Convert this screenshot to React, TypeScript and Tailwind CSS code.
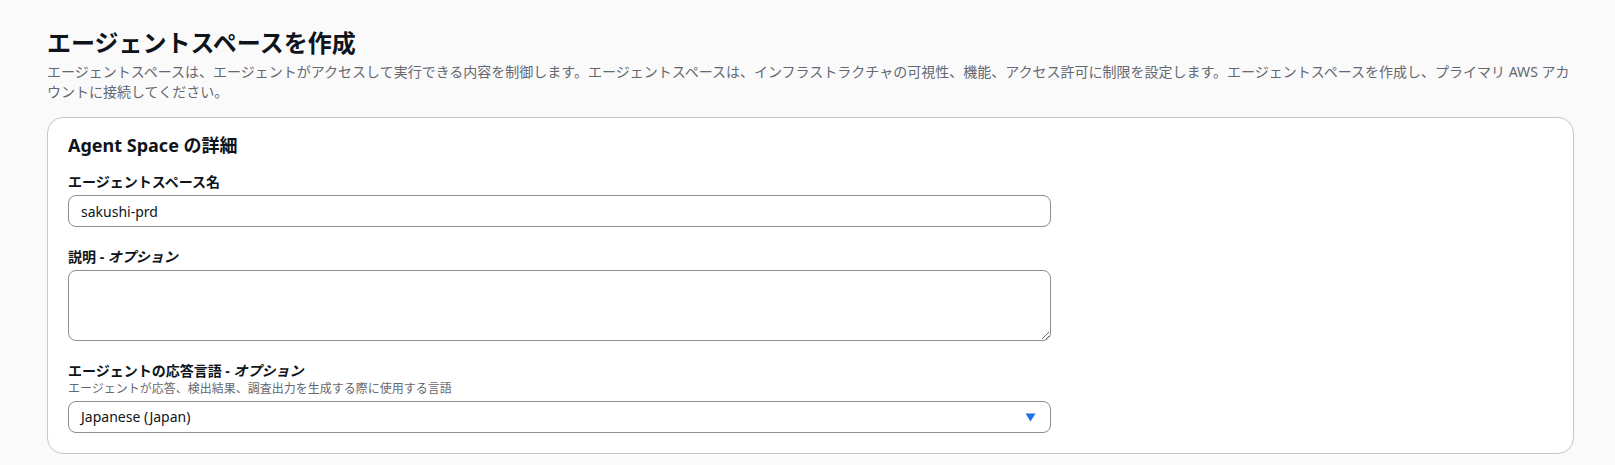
export default function App() {
  return (
    <div
      className="min-h-screen bg-[#fafafa] pl-[47px] pr-[41px] pt-7 pb-2 text-[#0f141a]"
      style={{ fontFamily: '"Noto Sans", "Noto Sans CJK JP", sans-serif' }}
    >
      {/* Page header */}
      <h1 className="text-[24px] font-bold leading-[30px]">エージェントスペースを作成</h1>
      <p className="mt-1 text-sm leading-5 text-[#656871]">
        エージェントスペースは、エージェントがアクセスして実行できる内容を制御します。エージェントスペースは、インフラストラクチャの可視性、機能、アクセス許可に制限を設定します。エージェントスペースを作成し、プライマリ AWS アカ
        <br />
        ウントに接続してください。
      </p>

      {/* Details container */}
      <div className="mt-[15px] rounded-2xl border border-[#c6c6cd] bg-white px-5 pt-4 pb-5">
        <h2 className="text-lg font-bold leading-[22px]">Agent Space の詳細</h2>

        <div className="mt-[17px] w-[983px]">
          <label className="block text-sm font-bold leading-[18px]">エージェントスペース名</label>
          <input
            type="text"
            defaultValue="sakushi-prd"
            className="mt-1 h-8 w-full rounded-lg border border-[#8c8c94] bg-white px-3 text-sm text-[#0f141a] outline-none"
          />
        </div>

        <div className="mt-[21px] w-[983px]">
          <label className="block text-sm font-bold leading-[18px]">
            説明 - <i>オプション</i>
          </label>
          <textarea className="mt-1 block h-[71px] w-full rounded-lg border border-[#8c8c94] bg-white px-3 py-1 text-sm outline-none" />
        </div>

        <div className="mt-[21px] w-[983px]">
          <label className="block text-sm font-bold leading-[18px]">
            エージェントの応答言語 - <i>オプション</i>
          </label>
          <p className="mt-px text-xs leading-4 text-[#656871]">
            エージェントが応答、検出結果、調査出力を生成する際に使用する言語
          </p>
          <button
            type="button"
            className="mt-1 flex h-8 w-full items-center justify-between rounded-lg border border-[#8c8c94] bg-white pl-3 pr-[14px] text-left text-sm"
          >
            <span>Japanese (Japan)</span>
            <svg width="11" height="9" viewBox="0 0 11 9" aria-hidden="true">
              <path d="M0.5 0.5 H10.5 L5.5 8.5 Z" fill="#1f6fe5" />
            </svg>
          </button>
        </div>
      </div>
    </div>
  )
}
